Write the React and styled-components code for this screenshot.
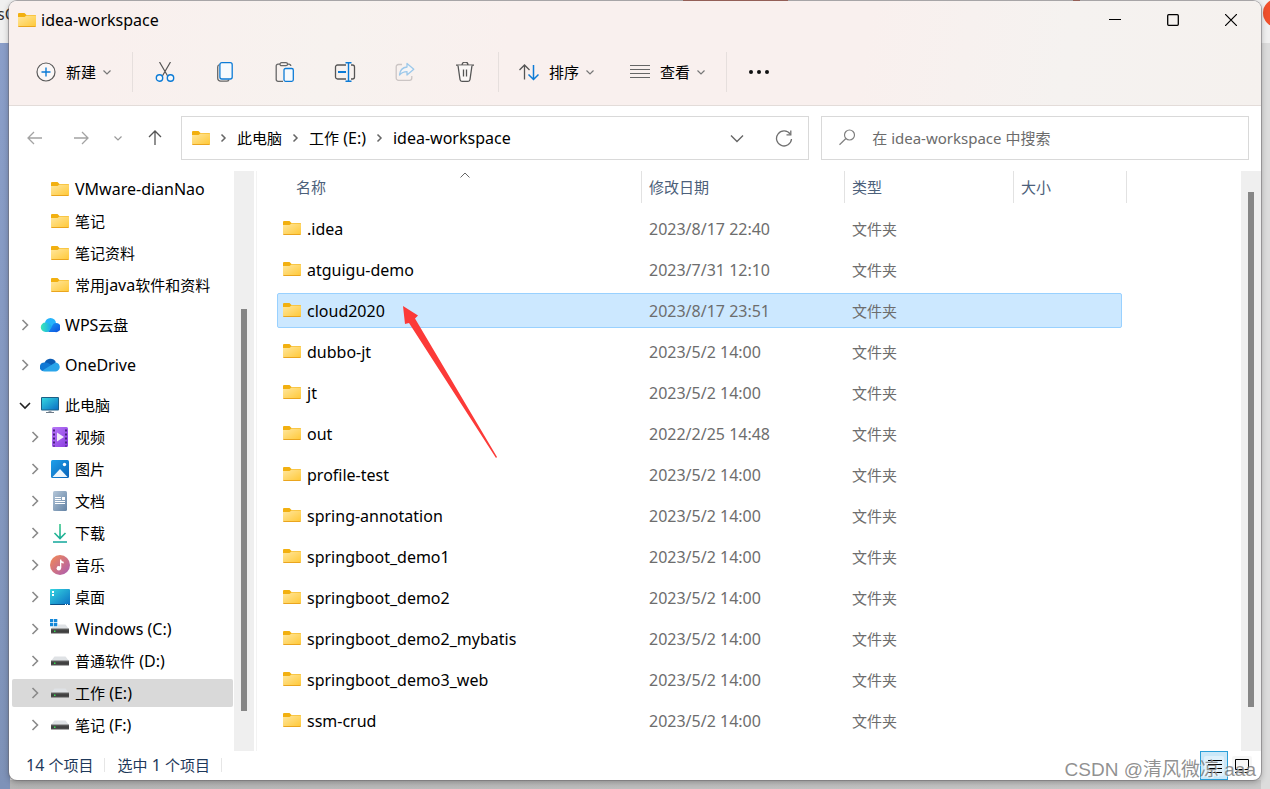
import React from "react";
import styled, { createGlobalStyle, css } from "styled-components";

const GlobalStyle = createGlobalStyle`
  *, *::before, *::after { box-sizing: border-box; }
  body {
    margin: 0;
    font-family: "Noto Sans", "Noto Sans CJK SC", sans-serif;
    font-size: 15px;
    line-height: 20px;
    color: #000;
  }
  button, input { font: inherit; color: inherit; }
  button { border: 0; padding: 0; background: none; }
  a { color: inherit; text-decoration: none; }
  svg { display: block; flex: none; }
`;

/* ---------- text ---------- */

const Label = styled.span`
  white-space: nowrap;
`;

const Latin = styled.span`
  font-size: 16px;
`;

/* Latin runs are set one pixel larger than the Chinese text around them. */
function Text({ children }) {
  return (
    <Label>
      {children.split(/([\x20-\x7e]+)/).map((part, i) =>
        i % 2 ? <Latin key={i}>{part}</Latin> : part
      )}
    </Label>
  );
}

/* ---------- icons ---------- */

const Svg = ({ w = 20, h = 20, children, ...rest }) => (
  <svg width={w} height={h} viewBox={`0 0 ${w} ${h}`} fill="none" aria-hidden="true" {...rest}>
    {children}
  </svg>
);

const HiddenSvg = styled.svg`
  position: absolute;
`;

const Defs = () => (
  <HiddenSvg width="0" height="0" aria-hidden="true">
    <defs>
      <linearGradient id="folder" x1="0" y1="0" x2="1" y2="1">
        <stop offset="0" stopColor="#ffe79f" />
        <stop offset="1" stopColor="#ffc93a" />
      </linearGradient>
      <linearGradient id="screen" x1="0" y1="0" x2="1" y2="1">
        <stop offset="0" stopColor="#35d6e0" />
        <stop offset="1" stopColor="#0b6fc4" />
      </linearGradient>
      <linearGradient id="wps" x1="0" y1="0" x2="1" y2="0">
        <stop offset="0" stopColor="#3be8b4" />
        <stop offset="1" stopColor="#16a5f5" />
      </linearGradient>
      <linearGradient id="wps2" x1="0" y1="0" x2="1" y2="1">
        <stop offset="0" stopColor="#1c9cf8" />
        <stop offset="1" stopColor="#0b4fdc" />
      </linearGradient>
      <linearGradient id="video" x1="0" y1="0" x2="1" y2="1">
        <stop offset="0" stopColor="#b878f8" />
        <stop offset="1" stopColor="#8a3de0" />
      </linearGradient>
      <linearGradient id="photo" x1="0" y1="0" x2="1" y2="1">
        <stop offset="0" stopColor="#1fa0ea" />
        <stop offset="1" stopColor="#0a62b8" />
      </linearGradient>
      <linearGradient id="doc" x1="0" y1="0" x2="1" y2="1">
        <stop offset="0" stopColor="#b4c6d8" />
        <stop offset="1" stopColor="#6383a5" />
      </linearGradient>
      <linearGradient id="down" x1="0" y1="0" x2="0" y2="20" gradientUnits="userSpaceOnUse">
        <stop offset="0" stopColor="#3cc98a" />
        <stop offset="1" stopColor="#0fa59b" />
      </linearGradient>
      <linearGradient id="music" x1="0" y1="0" x2="1" y2="1">
        <stop offset="0" stopColor="#f58a51" />
        <stop offset="1" stopColor="#a95bb5" />
      </linearGradient>
      <linearGradient id="drive" x1="0" y1="0" x2="0" y2="1">
        <stop offset="0" stopColor="#6a6a6a" />
        <stop offset="0.5" stopColor="#3a3a3a" />
        <stop offset="1" stopColor="#555" />
      </linearGradient>
    </defs>
  </HiddenSvg>
);

const FolderIcon = () => (
  <Svg w={18} h={14}>
    <path d="M0 1a1 1 0 0 1 1-1h5.500l2 2h8.500a1 1 0 0 1 1 1v2H0z" fill="#f2b010" />
    <path d="M0 4h6.500l2-1.500H17a1 1 0 0 1 1 1V13H0z" fill="url(#folder)" />
    <path d="M0 13h18a1 1 0 0 1-1 1H1a1 1 0 0 1-1-1z" fill="#eaa51e" />
  </Svg>
);

const WpsIcon = () => (
  <Svg>
    <circle cx="10.500" cy="8.500" r="5.500" fill="#25b4fb" />
    <path d="M8 17l5.500-8.300a4.600 4.600 0 1 1 1.500 8.300z" fill="url(#wps2)" />
    <path d="M5.500 7.500c2.600 0 5 1.600 6.500 4L9.500 15.500c-.8 1-1.800 1.500-3 1.500h-1a4.700 4.700 0 0 1 0-9.500z" fill="url(#wps)" />
  </Svg>
);

const OneDriveIcon = () => (
  <Svg>
    <path d="M4.500 8a6.200 6.200 0 0 1 11.300-1l-2.800 6z" fill="#0a5cb4" />
    <path d="M4.300 7.500c2-.3 3.500.3 5 1.200l5 3.300L3 16.300A4.500 4.500 0 0 1 4.300 7.500z" fill="#0f78d4" />
    <path d="M15.500 7.500a4.500 4.500 0 0 1 2.500 8c-.6.600-1.500 1-2.500 1H4.500c-.8 0-1.500-.4-2-1L12 9.500z" fill="#2aa5ea" />
  </Svg>
);

const PcIcon = () => (
  <Svg>
    <rect x="1" y="2" width="18" height="13.500" rx="1" fill="#1c5f86" />
    <rect x="2" y="3" width="16" height="11.500" fill="url(#screen)" />
    <path d="M8.500 15.500h3V17h-3z" fill="#9aa6b2" />
    <path d="M6 17h8v1H6z" fill="#6c7a88" />
  </Svg>
);

const VideoIcon = () => (
  <Svg>
    <rect x="2" width="16" height="20" rx="1.500" fill="url(#video)" />
    <path d="M4 2.500v17M16 2.500v17" stroke="#47207e" strokeWidth="2" strokeDasharray="2 2" />
    <path d="M7 5.500v9l7-4.500z" fill="#f2edf8" />
  </Svg>
);

const PictureIcon = () => (
  <Svg>
    <rect x="1" y="1" width="18" height="18" rx="1.500" fill="url(#photo)" />
    <path d="M2.500 18l7.500-8 7.500 8z" fill="#eef6fc" />
    <circle cx="14.500" cy="5.500" r="1.700" fill="#fff" />
  </Svg>
);

const DocumentIcon = () => (
  <Svg>
    <rect x="3" width="14" height="20" rx="1.500" fill="url(#doc)" />
    <path d="M5 6.500h6M5 8.500h6M5 10.500h10M5 12.500h10" stroke="#fff" />
    <path d="M12 6h3v3h-3z" fill="#fff" />
  </Svg>
);

const DownloadIcon = () => (
  <Svg stroke="url(#down)" strokeWidth="1.600">
    <path d="M10.010 1v14M4.500 10l5.500 5.500 5.500-5.500M3 18.990l14 .01" />
  </Svg>
);

const MusicIcon = () => (
  <Svg>
    <circle cx="10" cy="10" r="10" fill="url(#music)" />
    <circle cx="8.800" cy="13.200" r="2.200" fill="#fff" />
    <path d="M10 4.500h1.300c0 1.500 1 1.800 2.400 2.300v1.700c-1 0-1.800-.3-2.400-.8v5.500H10z" fill="#fff" />
  </Svg>
);

const DesktopIcon = () => (
  <Svg>
    <rect y="2" width="20" height="16" rx="1" fill="url(#screen)" />
    <path d="M0 17h20a1 1 0 0 1-1 1H1a1 1 0 0 1-1-1z" fill="#0b4f86" />
    <path d="M2 4h2v2H2zM2 7h2v2H2z" fill="#fff" />
    <path d="M15 17.500h1M17 17.500h1" stroke="#fff" />
  </Svg>
);

const DriveIcon = ({ system }) => (
  <Svg>
    <path d="M4.500 5.500h11L19 10H1z" fill="#dfe2e5" />
    <rect x="1" y="9.500" width="18" height="5" fill="url(#drive)" />
    <rect x="4" y="11.500" width="1.500" height="1.500" fill="#35e052" />
    {system && (
      <>
        <path d="M0 0h8v7.500H0z" fill="#fff" />
        <path d="M0 0h3.300v3.200H0zM4 0h3.300v3.200H4zM0 4h3.300v3.200H0zM4 4h3.300v3.200H4z" fill="#1487d8" />
      </>
    )}
  </Svg>
);

const PlusIcon = () => (
  <Svg stroke="#5a5a5a" strokeWidth="1.200">
    <circle cx="10" cy="10" r="9" fill="#fbf7f6" />
    <path d="M10 5.500v9M5.500 10h9" stroke="#0c7bd6" strokeWidth="1.400" />
  </Svg>
);

const CutIcon = () => (
  <Svg stroke="#555" strokeWidth="1.200">
    <path d="M4.500 0l8 13.700M15.500 0l-8 13.700" />
    <g stroke="#0c7bd6" strokeWidth="1.400" fill="#f5f8fb">
      <circle cx="4.500" cy="16" r="3.200" />
      <circle cx="15.500" cy="16" r="3.200" />
    </g>
  </Svg>
);

const CopyIcon = () => (
  <Svg stroke="#666" strokeWidth="1.300">
    <path d="M4.500 2.500A2.500 2.500 0 0 0 2.700 5v11a3 3 0 0 0 3 3.200h6a2.500 2.500 0 0 0 2.300-1.500" />
    <rect x="4.900" y="0.700" width="12.300" height="16.300" rx="2" stroke="#0c7bd6" fill="#f7fafd" />
  </Svg>
);

const PasteIcon = () => (
  <Svg stroke="#666" strokeWidth="1.300">
    <path d="M8 19.300H3a1.800 1.800 0 0 1-1.800-1.800V4A1.800 1.800 0 0 1 3 2.200h2M12 2.200h2A1.800 1.800 0 0 1 15.800 4" />
    <rect x="5" y="0.700" width="7.500" height="3" rx="1.500" />
    <rect x="9" y="6.500" width="9.300" height="12.800" rx="1.500" stroke="#0c7bd6" fill="#f7fafd" />
  </Svg>
);

const RenameIcon = () => (
  <Svg w={22} stroke="#555" strokeWidth="1.300">
    <path d="M12 17H3.500a2 2 0 0 1-2-2V5a2 2 0 0 1 2-2H12M17 3h1.500a2 2 0 0 1 2 2v10a2 2 0 0 1-2 2H17" />
    <path d="M11.500 0.700h6M11.500 19.300h6M14.500 0.700v18.600" stroke="#0c7bd6" strokeWidth="1.400" />
    <path d="M4 10h8" stroke="#0c7bd6" strokeWidth="2" />
  </Svg>
);

const ShareIcon = () => (
  <Svg stroke="#cbc5c4" strokeWidth="1.300">
    <path d="M7 2.500H3.500A2.300 2.300 0 0 0 1.200 5v11a2.300 2.300 0 0 0 2.300 2.300h11a2.300 2.300 0 0 0 2.300-2.300v-2" />
    <path
      d="M12 1.500l6.800 5.700L12 13V9.600c-3 0-5.300.8-7.500 3.400.4-4.500 3-7.600 7.500-8z"
      stroke="#9cc8ea"
      fill="#f5f5f7"
      strokeLinejoin="round"
    />
  </Svg>
);

const TrashIcon = () => (
  <Svg stroke="#555" strokeWidth="1.300">
    <path d="M1 3.200h18M7 3a3 3 0 0 1 6 0" />
    <path d="M3 3.500l2 14a2 2 0 0 0 2 1.800h6a2 2 0 0 0 2-1.800l2-14" fill="#fbf8f7" />
    <path d="M8.500 7.500v7M11.500 7.500v7" />
  </Svg>
);

const SortIcon = () => (
  <Svg strokeWidth="1.300">
    <path d="M5.500 17.500V3M0.500 8l5-5 5 5" stroke="#555" />
    <path d="M14.500 3v14.500M9.500 12.500l5 5 5-5" stroke="#0c7bd6" strokeWidth="1.500" />
  </Svg>
);

const LinesIcon = () => (
  <Svg stroke="#666" strokeWidth="1.200">
    <path d="M0 3.500h20M0 7.500h20M0 11.500h20M0 15.500h20" />
  </Svg>
);

const DotsIcon = () => (
  <Svg>
    <g fill="#111">
      <circle cx="2" cy="10" r="2" />
      <circle cx="10" cy="10" r="2" />
      <circle cx="18" cy="10" r="2" />
    </g>
  </Svg>
);

const SmallDown = ({ color = "#777" }) => (
  <Svg w={8} h={8} stroke={color} strokeWidth="1.200">
    <path d="M0.500 2.500L4 6l3.500-3.500" />
  </Svg>
);

const CrumbArrow = () => (
  <Svg w={7} h={10} stroke="#666" strokeWidth="1.500">
    <path d="M1.500 1.500L5 5 1.500 8.500" />
  </Svg>
);

const TreeArrow = ({ open }) => (
  <Svg w={16} h={16} stroke={open ? "#222" : "#8a8a8a"} strokeWidth="1.600">
    <path d={open ? "M3 6l5 5 5-5" : "M5.500 3l5 5-5 5"} />
  </Svg>
);

const ArrowIcon = ({ turn, color = "#a3a3a3" }) => (
  <Svg w={16} h={16} stroke={color} strokeWidth="1.300">
    <g transform={`rotate(${turn} 8 8)`}>
      <path d="M1 8h14M7 2L1 8l6 6" />
    </g>
  </Svg>
);

const DownIcon = () => (
  <Svg w={14} h={14} stroke="#666" strokeWidth="1.400">
    <path d="M1 4.500l6 6 6-6" />
  </Svg>
);

const RefreshIcon = () => (
  <Svg w={18} h={18} stroke="#707070" strokeWidth="1.300">
    <path d="M15.200 5.200A7.500 7.500 0 1 0 16.500 10" />
    <path d="M15.800 1.500v4.300h-4.300" />
  </Svg>
);

const SearchIcon = () => (
  <Svg w={18} h={18} stroke="#808080" strokeWidth="1.200">
    <circle cx="11.500" cy="6" r="5" />
    <path d="M7.900 9.500L1.500 15.800" />
  </Svg>
);

const SortMark = () => (
  <Svg w={10} h={6} stroke="#666">
    <path d="M0.500 5.500L5 1l4.500 4.500" />
  </Svg>
);

/* ---------- desktop behind the window ---------- */

const Desktop = styled.div`
  position: relative;
  display: flex;
  min-height: 100vh;
  padding: 1px 9px 9px;
  overflow: hidden;
  background:
    linear-gradient(#c65a45, #c65a45) 683px 0 / 105px 1px no-repeat,
    linear-gradient(#c65a45, #c65a45) 1073px 0 / 7px 1px no-repeat,
    linear-gradient(#f0f0f0, #f0f0f0) 0 0 / 100% 43px no-repeat,
    linear-gradient(#8b9fca, #7e92b8) 0 0 / 10px 100% no-repeat,
    linear-gradient(90deg, #b4b4b4, #c8c8c8) 0 100% / calc(100% - 9px) 9px no-repeat,
    #dcdcdc;
`;

const BehindText = styled.span`
  position: absolute;
  left: -3px;
  top: 4px;
  font-size: 16px;
  color: #333;
`;

const BehindBadge = styled.span`
  position: absolute;
  right: -21px;
  top: -1px;
  width: 28px;
  height: 28px;
  border-radius: 50%;
  background: #f0512c;
`;

const Watermark = styled.span`
  position: absolute;
  right: 14px;
  bottom: 6px;
  font-family: "Liberation Sans", "Noto Sans CJK SC", sans-serif;
  font-size: 19px;
  line-height: 26px;
  color: rgba(125, 125, 125, 0.85);
  text-shadow: 1px 1px 0 rgba(255, 255, 255, 0.7);
  white-space: nowrap;
  pointer-events: none;
`;

/* ---------- window ---------- */

const Window = styled.div`
  position: relative;
  flex: 1;
  min-width: 0;
  display: flex;
  flex-direction: column;
  border-radius: 8px;
  overflow: hidden;
  background: #fff;
  box-shadow: 0 0 0 1px rgba(110, 105, 110, 0.5), 0 2px 6px rgba(0, 0, 0, 0.3);
`;

const Chrome = styled.header`
  border-bottom: 1px solid #e3dcd9;
  background: linear-gradient(100deg, #f9f0ee 8%, #f7f2ef 26%, #f9f0ee 40%, #f9f0ee 68%, #f5f2f0 84%, #f5f1ee);
`;

const TitleBar = styled.div`
  display: flex;
  align-items: center;
  height: 37px;
  padding: 0 1px 0 9px;
`;

const Title = styled.h1`
  flex: 1;
  margin: 0 0 0 5px;
  font-size: 15px;
  font-weight: 400;
  line-height: 20px;
`;

const WindowButton = styled.button`
  display: flex;
  align-items: center;
  justify-content: center;
  width: 58px;
  height: 36px;
`;

const Toolbar = styled.div`
  display: flex;
  align-items: center;
  height: 67px;
  padding: 0 9px;
`;

const ToolButton = styled.button`
  display: flex;
  align-items: center;
  justify-content: center;
  height: 40px;
  ${({ $labelled }) =>
    $labelled
      ? css`
          gap: 7px;
          padding: 0 18px;
          svg:first-child { margin-right: 3px; }
        `
      : css`
          width: 60px;
        `}
`;

const ToolDivider = styled.span`
  width: 1px;
  height: 40px;
  margin: 0 2px 0 3px;
  background: #e6dfdd;
`;

const NavBar = styled.div`
  display: grid;
  grid-template-columns: 148px 47fr 32fr;
  align-items: center;
  gap: 12px;
  padding: 10px 12px 11px;
`;

const History = styled.div`
  display: flex;
  gap: 18px;
`;

const HistoryButton = styled.button`
  display: flex;
  align-items: center;
  justify-content: center;
  width: ${({ $narrow }) => ($narrow ? 10 : 28)}px;
  height: 32px;
`;

const Address = styled.nav`
  display: flex;
  align-items: center;
  gap: 10px;
  height: 44px;
  padding: 0 6px 0 10px;
  border: 1px solid #d9d9d9;
`;

const AddressButton = styled.button`
  display: flex;
  align-items: center;
  justify-content: center;
  width: 37px;
  height: 28px;
`;

const Spacer = styled.span`
  flex: 1;
`;

const Search = styled.label`
  display: flex;
  align-items: center;
  gap: 16px;
  height: 44px;
  padding: 0 16px;
  border: 1px solid #d9d9d9;
`;

const SearchInput = styled.input`
  flex: 1;
  min-width: 0;
  border: 0;
  padding: 0;
  outline: 0;
  background: none;
  &::placeholder { color: #6b6b6b; opacity: 1; }
`;

const Body = styled.div`
  flex: 1;
  display: flex;
  min-height: 0;
`;

const Sidebar = styled.aside`
  flex: none;
  display: flex;
  width: 248px;
  padding-right: 2px;
  border-right: 1px solid #f3f3f3;
`;

const Tree = styled.ul`
  flex: 1;
  display: flex;
  flex-direction: column;
  gap: 4px;
  margin: 0;
  padding: 4px 1px 12px 3px;
  list-style: none;
`;

const TreeItem = styled.li`
  margin-top: ${({ $spaced }) => ($spaced ? 8 : 0)}px;
`;

const TreeLink = styled.a`
  display: flex;
  align-items: center;
  height: 28px;
  padding-left: ${({ $deep }) => ($deep ? 15 : 5)}px;
  border-radius: 2px;
  background: ${({ $current }) => ($current ? "#d9d9d9" : "none")};
`;

const TreeToggle = styled.span`
  width: 16px;
  margin-right: 7px;
`;

const TreeGlyph = styled.span`
  display: flex;
  align-items: center;
  justify-content: center;
  width: 20px;
  height: 20px;
  margin-right: 5px;
`;

const ScrollTrack = styled.div`
  flex: none;
  display: flex;
  flex-direction: column;
  align-items: center;
  width: 20px;
  background: #efefef;
`;

const ScrollSpace = styled.span`
  flex: ${({ $share }) => $share} 0 0;
`;

const ScrollThumb = styled.span`
  flex: ${({ $share }) => $share} 0 0;
  width: 6px;
  background: #868686;
`;

const Files = styled.main`
  position: relative;
  flex: 1;
  min-width: 0;
  padding-left: 20px;
`;

const FileTable = styled.table`
  display: block;
  border-collapse: collapse;
`;

const HeadRow = styled.tr`
  display: grid;
  grid-template-columns: 365px 203px 169px 113px;
  width: fit-content;
  margin-bottom: 8px;
`;

const HeadCell = styled.th`
  position: relative;
  height: 32px;
  padding: 6px 7px 0;
  padding-left: ${({ $name }) => ($name ? 19 : 7)}px;
  border-right: 1px solid #e2e2e2;
  font-weight: 400;
  text-align: left;
  color: #4c607a;
`;

const SortBadge = styled.span`
  position: absolute;
  top: 1px;
  left: calc(50% + 1px);
`;

const FileRow = styled.tr`
  display: grid;
  grid-template-columns: 364px 203px 169px 107px;
  width: fit-content;
  height: 35px;
  margin-bottom: 6px;
  border: 1px solid ${({ $selected }) => ($selected ? "#99d1ff" : "transparent")};
  border-radius: 2px;
  background: ${({ $selected }) => ($selected ? "#cce8ff" : "none")};
`;

const FileCell = styled.td`
  display: flex;
  align-items: center;
  padding: 0 7px;
  color: #6d6d6d;
`;

const FileName = styled(FileCell)`
  gap: 6px;
  padding: 0 5px;
  color: #000;
  svg { margin-bottom: 2px; }
`;

const PointerArrow = styled.svg`
  position: absolute;
  left: 146px;
  top: 135px;
  pointer-events: none;
`;

const StatusBar = styled.footer`
  display: flex;
  align-items: center;
  height: 29px;
  padding: 0 5px 0 17px;
  color: #1e395b;
`;

const StatusItem = styled.span`
  display: flex;
  padding-right: 11px;
  margin: 0 12px 2px 0;
  line-height: 14px;
  border-right: 1px solid #e6e6e6;
`;

const ViewButton = styled.button`
  display: flex;
  align-items: center;
  justify-content: center;
  width: 28px;
  height: 29px;
  border: 1px solid ${({ $on }) => ($on ? "#2a9fd8" : "transparent")};
  background: ${({ $on }) => ($on ? "#cbe8f8" : "none")};
`;

/* ---------- data ---------- */

const tree = [
  { name: "VMware-dianNao", icon: <FolderIcon />, deep: true, leaf: true },
  { name: "笔记", icon: <FolderIcon />, deep: true, leaf: true },
  { name: "笔记资料", icon: <FolderIcon />, deep: true, leaf: true },
  { name: "常用java软件和资料", icon: <FolderIcon />, deep: true, leaf: true },
  { name: "WPS云盘", icon: <WpsIcon />, spaced: true },
  { name: "OneDrive", icon: <OneDriveIcon />, spaced: true },
  { name: "此电脑", icon: <PcIcon />, spaced: true, open: true },
  { name: "视频", icon: <VideoIcon />, deep: true },
  { name: "图片", icon: <PictureIcon />, deep: true },
  { name: "文档", icon: <DocumentIcon />, deep: true },
  { name: "下载", icon: <DownloadIcon />, deep: true },
  { name: "音乐", icon: <MusicIcon />, deep: true },
  { name: "桌面", icon: <DesktopIcon />, deep: true },
  { name: "Windows (C:)", icon: <DriveIcon system />, deep: true },
  { name: "普通软件 (D:)", icon: <DriveIcon />, deep: true },
  { name: "工作 (E:)", icon: <DriveIcon />, deep: true, current: true },
  { name: "笔记 (F:)", icon: <DriveIcon />, deep: true },
];

const files = [
  [".idea", "2023/8/17 22:40"],
  ["atguigu-demo", "2023/7/31 12:10"],
  ["cloud2020", "2023/8/17 23:51"],
  ["dubbo-jt", "2023/5/2 14:00"],
  ["jt", "2023/5/2 14:00"],
  ["out", "2022/2/25 14:48"],
  ["profile-test", "2023/5/2 14:00"],
  ["spring-annotation", "2023/5/2 14:00"],
  ["springboot_demo1", "2023/5/2 14:00"],
  ["springboot_demo2", "2023/5/2 14:00"],
  ["springboot_demo2_mybatis", "2023/5/2 14:00"],
  ["springboot_demo3_web", "2023/5/2 14:00"],
  ["ssm-crud", "2023/5/2 14:00"],
];

const iconTools = [
  ["剪切", <CutIcon />],
  ["复制", <CopyIcon />],
  ["粘贴", <PasteIcon />],
  ["重命名", <RenameIcon />],
  ["共享", <ShareIcon />],
  ["删除", <TrashIcon />],
];

function MenuTool({ icon, label }) {
  return (
    <ToolButton type="button" $labelled>
      {icon}
      <Text>{label}</Text>
      <SmallDown />
    </ToolButton>
  );
}

function Scrollbar({ before, size, after }) {
  return (
    <ScrollTrack aria-hidden="true">
      <ScrollSpace $share={before} />
      <ScrollThumb $share={size} />
      <ScrollSpace $share={after} />
    </ScrollTrack>
  );
}

export default function App() {
  return (
    <Desktop>
      <GlobalStyle />
      <Defs />
      <BehindText aria-hidden="true">sC</BehindText>
      <BehindBadge />
      <Window>
        <Chrome>
          <TitleBar>
            <FolderIcon />
            <Title><Text>idea-workspace</Text></Title>
            <WindowButton type="button" aria-label="最小化">
              <Svg w={12} h={12} stroke="#000"><path d="M0 5.500h12" /></Svg>
            </WindowButton>
            <WindowButton type="button" aria-label="最大化">
              <Svg w={12} h={12} stroke="#000" strokeWidth="1.300">
                <rect x="0.700" y="0.700" width="10.600" height="10.600" rx="1" />
              </Svg>
            </WindowButton>
            <WindowButton type="button" aria-label="关闭">
              <Svg w={12} h={12} stroke="#000" strokeWidth="1.200"><path d="M0 0l12 12M12 0L0 12" /></Svg>
            </WindowButton>
          </TitleBar>
          <Toolbar role="toolbar">
            <MenuTool icon={<PlusIcon />} label="新建" />
            <ToolDivider />
            {iconTools.map(([name, icon]) => (
              <ToolButton key={name} type="button" aria-label={name}>{icon}</ToolButton>
            ))}
            <ToolDivider />
            <MenuTool icon={<SortIcon />} label="排序" />
            <MenuTool icon={<LinesIcon />} label="查看" />
            <ToolDivider />
            <ToolButton type="button" aria-label="更多"><DotsIcon /></ToolButton>
          </Toolbar>
        </Chrome>

        <NavBar>
          <History>
            <HistoryButton type="button" aria-label="后退"><ArrowIcon turn={0} /></HistoryButton>
            <HistoryButton type="button" aria-label="前进"><ArrowIcon turn={180} /></HistoryButton>
            <HistoryButton type="button" aria-label="最近的位置" $narrow><SmallDown color="#999" /></HistoryButton>
            <HistoryButton type="button" aria-label="向上"><ArrowIcon turn={90} color="#555" /></HistoryButton>
          </History>
          <Address aria-label="地址">
            <FolderIcon />
            <CrumbArrow />
            <a href="#pc"><Text>此电脑</Text></a>
            <CrumbArrow />
            <a href="#e"><Text>工作 (E:)</Text></a>
            <CrumbArrow />
            <a href="#workspace"><Text>idea-workspace</Text></a>
            <Spacer />
            <AddressButton type="button" aria-label="历史"><DownIcon /></AddressButton>
            <AddressButton type="button" aria-label="刷新"><RefreshIcon /></AddressButton>
          </Address>
          <Search>
            <SearchIcon />
            <SearchInput type="search" aria-label="搜索" placeholder="在 idea-workspace 中搜索" />
          </Search>
        </NavBar>

        <Body>
          <Sidebar>
            <Tree>
              {tree.map((t, i) => (
                <TreeItem key={i} $spaced={t.spaced}>
                  <TreeLink href="#tree" $deep={t.deep} $current={t.current}>
                    <TreeToggle>{!t.leaf && <TreeArrow open={t.open} />}</TreeToggle>
                    <TreeGlyph>{t.icon}</TreeGlyph>
                    <Text>{t.name}</Text>
                  </TreeLink>
                </TreeItem>
              ))}
            </Tree>
            <Scrollbar before={138} size={402} after={40} />
          </Sidebar>
          <Files>
            <FileTable>
              <thead>
                <HeadRow>
                  <HeadCell $name scope="col">
                    <Text>名称</Text>
                    <SortBadge><SortMark /></SortBadge>
                  </HeadCell>
                  <HeadCell scope="col"><Text>修改日期</Text></HeadCell>
                  <HeadCell scope="col"><Text>类型</Text></HeadCell>
                  <HeadCell scope="col"><Text>大小</Text></HeadCell>
                </HeadRow>
              </thead>
              <tbody>
                {files.map(([name, date]) => (
                  <FileRow key={name} $selected={name === "cloud2020"}>
                    <FileName>
                      <FolderIcon />
                      <Text>{name}</Text>
                    </FileName>
                    <FileCell><Text>{date}</Text></FileCell>
                    <FileCell><Text>文件夹</Text></FileCell>
                    <FileCell />
                  </FileRow>
                ))}
              </tbody>
            </FileTable>
            <PointerArrow width="94" height="152" viewBox="0 0 94 152" aria-hidden="true">
              <path d="M0 0l15 9.500-3 3L94 151 93 152 6 17 2 18z" fill="#fc3a38" />
            </PointerArrow>
          </Files>
          <Scrollbar before={21} size={515} after={44} />
        </Body>

        <StatusBar>
          <StatusItem><Text>14 个项目</Text></StatusItem>
          <StatusItem><Text>选中 1 个项目</Text></StatusItem>
          <Spacer />
          <ViewButton type="button" aria-label="详细信息" $on>
            <Svg w={20} h={20}>
              <rect width="20" height="20" rx="2" fill="#dff1fb" />
              <path d="M4 4.500h14M4 8.500h14M4 12.500h14M4 16.500h14" stroke="#000" />
            </Svg>
          </ViewButton>
          <ViewButton type="button" aria-label="大图标">
            <Svg w={20} h={20}>
              <rect width="20" height="20" rx="2" fill="#f6f6f6" />
              <path d="M3.500 3.500h13v10h-13zM3 16.500h14" stroke="#000" />
            </Svg>
          </ViewButton>
        </StatusBar>
      </Window>
      <Watermark>CSDN @清风微凉 aaa</Watermark>
    </Desktop>
  );
}
